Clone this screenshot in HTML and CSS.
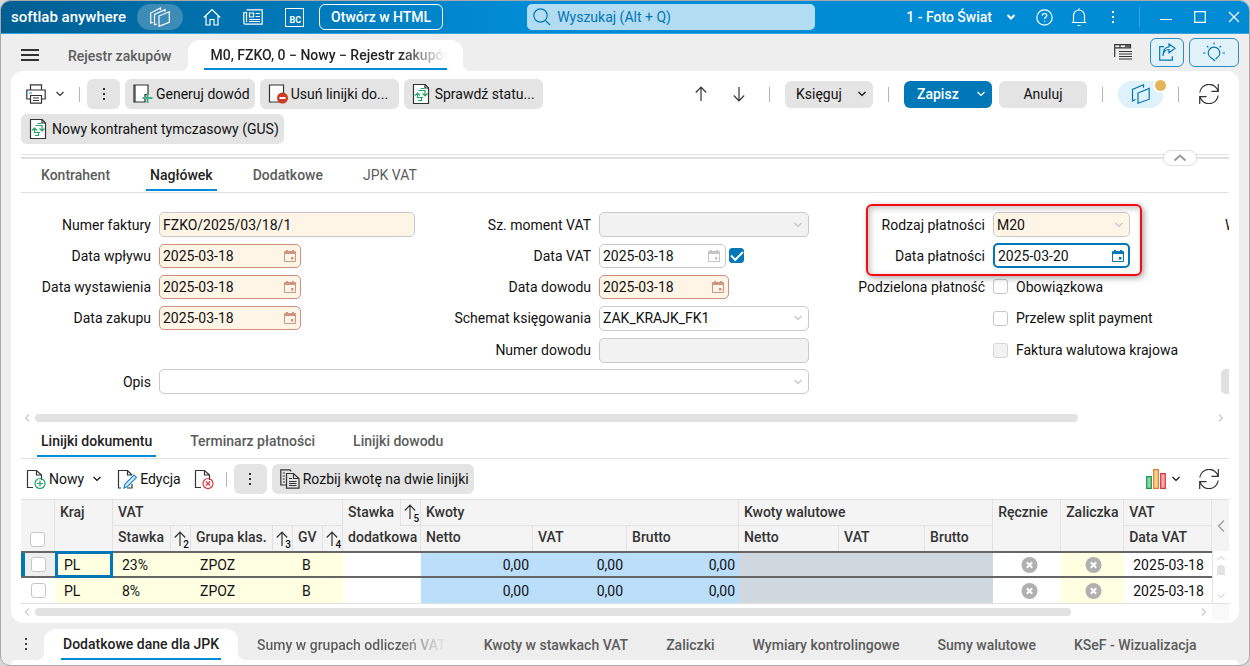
FILE: index.html
```html
<!DOCTYPE html>
<html lang="pl">
<head>
    <meta charset="UTF-8">
    <meta name="viewport" content="width=device-width, initial-scale=1.0">
    <title>Rejestr zakupów</title>
    <link rel="stylesheet" href="styles.css">
</head>
<body>
    <svg class="sprite" aria-hidden="true">
        <symbol id="chevron" viewBox="0 0 10 10"><path d="M1.5 3L5 6.5 8.5 3"/></symbol>
        <symbol id="dots" viewBox="0 0 4 14"><path class="solid" d="M1 1h2v2H1zM1 6h2v2H1zM1 11h2v2H1z"/></symbol>
        <symbol id="calendar" viewBox="0 0 12 12"><path class="solid" fill-rule="evenodd" d="M2 0h2v1h4V0h2v1h1a1 1 0 0 1 1 1v9a1 1 0 0 1-1 1H1a1 1 0 0 1-1-1V2a1 1 0 0 1 1-1h1zM1 4v7h10V4zM7 7h2.500v2.500H7z"/></symbol>
        <symbol id="refresh" viewBox="0 0 20 20"><path d="M.8 8.500A9.300 9.300 0 0 1 19 7.200M19.300 0v7.300H12.500M19.200 11.500A9.300 9.300 0 0 1 1 12.800M.7 20v-7.300H7.500"/></symbol>
        <symbol id="sync-doc" viewBox="0 0 20 20"><path class="paper" d="M1.500.5h11.500l3.500 3.500v15.500h-15z"/><path d="M13 .5V4h3.500"/><path class="green" d="M6.500 6.500h6.500v5M10.500 9.500l2.500 2.500 2.500-2.500M8.500 4.500h4M11 13.500H5.500V9.500M3 11.500l2.500-2.500L8 11.500M6 16.500h3.500v-3"/></symbol>
        <symbol id="close-circle" viewBox="0 0 17 16"><circle class="solid" cx="8.500" cy="8" r="8"/><path class="cross" d="M5.800 5.300l5.400 5.400M11.200 5.300l-5.400 5.400"/></symbol>
        <symbol id="arrow-up" viewBox="0 0 12 16"><path d="M6 15V1.500M.8 6.500L6 1.200l5.200 5.300"/></symbol>
        <symbol id="page" viewBox="0 0 20 20"><path d="M7 18.500H1.500v-17h9l5 4.500v5M10.500 1.500V6h5"/></symbol>
    </svg>

    <div class="window">
        <header class="titlebar">
            <span class="brand">softlab anywhere</span>
            <button class="app-pill" aria-label="Aplikacje">
                <svg width="20" height="20" viewBox="0 0 20 20"><path d="M3 15.500L.7 16V6l9.800-5v2M7 17l-2.500.8V7.500L15 2.800v2M9 9l10.300-4.200v10.500L9 19.300z"/></svg>
            </button>
            <button class="title-icon home" aria-label="Start">
                <svg width="18" height="18" viewBox="0 0 18 18"><path d="M.8 9.500L9 1.500l8.200 8M3 8v9h4v-5.500h4V17h4V8"/></svg>
            </button>
            <button class="title-icon" aria-label="Wiadomości">
                <svg width="20" height="16" viewBox="0 0 20 16"><path d="M3.500.8h15.700v14.400H2.300a1.500 1.500 0 0 1-1.500-1.500V3.500h2.700V13M6.500 4h4v4h-4zM12.500 4.500H17M12.500 7.500H17M6 10.500h11M6 12.500h11"/></svg>
            </button>
            <button class="bc-icon">BC</button>
            <button class="open-html">Otwórz w HTML</button>
            <label class="search">
                <svg width="18" height="18" viewBox="0 0 18 18"><circle cx="7.500" cy="7.500" r="6.700"/><path d="M12.300 12.300L17 17"/></svg>
                <input type="search" placeholder="Wyszukaj (Alt + Q)" aria-label="Wyszukaj">
            </label>
            <div class="title-right">
                <button class="company">1 - Foto Świat <svg width="10" height="10"><use href="#chevron"/></svg></button>
                <button class="title-icon help" aria-label="Pomoc">
                    <svg width="17" height="17" viewBox="0 0 17 17"><circle cx="8.500" cy="8.500" r="7.700"/><path d="M6.300 6.800c0-3 4.500-3 4.500-.3 0 1.800-2.200 1.700-2.200 3.500M8.600 11.700v1.400"/></svg>
                </button>
                <button class="title-icon" aria-label="Powiadomienia">
                    <svg width="16" height="19" viewBox="0 0 16 19"><path d="M.8 14.500h14.400M2.500 14.500V7.500a5.500 5.500 0 0 1 11 0v7M8 .5V2M6.500 17.500h3"/></svg>
                </button>
                <button class="title-icon" aria-label="Więcej"><svg width="4" height="14"><use href="#dots"/></svg></button>
                <span class="title-sep"></span>
                <button class="title-icon win" aria-label="Minimalizuj"><svg width="12" height="12" viewBox="0 0 12 12"><path d="M0 8.500h12"/></svg></button>
                <button class="title-icon win" aria-label="Maksymalizuj"><svg width="12" height="12" viewBox="0 0 12 12"><path d="M.7.7h10.600v10.600H.7z"/></svg></button>
                <button class="title-icon win" aria-label="Zamknij"><svg width="12" height="12" viewBox="0 0 12 12"><path d="M1 1l10 10M11 1L1 11"/></svg></button>
            </div>
        </header>

        <nav class="page-tabs">
            <button class="burger" aria-label="Menu"><svg width="18" height="12" viewBox="0 0 18 12"><path class="solid" d="M0 0h18v2H0zM0 5h18v2H0zM0 10h18v2H0z"/></svg></button>
            <a class="page-tab" href="#">Rejestr zakupów</a>
            <a class="page-tab active" href="#"><span class="fade">M0, FZKO, 0 − Nowy − Rejestr zakupów</span></a>
            <div class="page-actions">
                <button class="plain" aria-label="Lista"><svg width="20" height="18" viewBox="0 0 20 18"><path d="M1.700 14V1.600h15.800v3.200H1.700M7 1.600v3.200M12 3.200h5"/><path class="rules" d="M6 8.500h13M6 11h13M6 13.500h13M6 16h13"/></svg></button>
                <button class="outlined share" aria-label="Udostępnij"><svg width="18" height="18" viewBox="0 0 18 18"><path d="M6 3.700H1.700v13.500h12.600v-4M5 13c.3-4.500 2.500-6.500 6-6.500v3.200L17 5.200 11 1v3C6.500 4 5 8 5 13z"/></svg></button>
                <button class="outlined bulb" aria-label="Podpowiedzi"><svg width="22" height="20" viewBox="0 0 22 20"><path d="M12 19l-1.500-1.500L8 15.800a5.800 5.800 0 1 1 6 0L12.500 17M11 .5V2.500M4 4l1.400 1.400M18 4l-1.400 1.400M0 11h2.500M19.500 11H22"/></svg></button>
            </div>
        </nav>

        <main class="panel">
            <div class="toolbar">
                <button class="plain print" aria-label="Drukuj">
                    <svg width="20" height="20" viewBox="0 0 20 20"><path d="M4.500 6V.8h11V6M4.500 15H.8V6h18.400v9H15.500M4.500 11.500h11v7.700h-11zM7 14h6M7 16.500h6"/><path class="blue" d="M3 9h3"/></svg>
                    <svg width="10" height="10"><use href="#chevron"/></svg>
                </button>
                <span class="sep"></span>
                <button class="tool kebab" aria-label="Więcej"><svg width="4" height="14"><use href="#dots"/></svg></button>
                <button class="tool"><svg width="20" height="20" viewBox="0 0 20 20"><path class="paper" d="M1 1h14v9.500h-3V18H1z"/><path d="M2 1v17"/><path class="green plus" d="M14.500 9v10M9.500 14h10"/></svg>Generuj dowód</button>
                <button class="tool wide"><svg width="20" height="20" viewBox="0 0 20 20"><path class="paper" d="M1.500 1h14v17h-14z"/><circle class="red-fill" cx="14.500" cy="14" r="5.500"/><path class="bar" d="M11.500 14h6"/></svg>Usuń linijki do...</button>
                <button class="tool wide"><svg width="20" height="20"><use href="#sync-doc"/></svg>Sprawdź statu...</button>
                <div class="toolbar-right">
                    <div class="arrows">
                        <button aria-label="Poprzedni"><svg width="12" height="16"><use href="#arrow-up"/></svg></button>
                        <button aria-label="Następny"><svg class="down" width="12" height="16"><use href="#arrow-up"/></svg></button>
                    </div>
                    <span class="sep"></span>
                    <button class="action">Księguj <svg width="10" height="10"><use href="#chevron"/></svg></button>
                    <span class="sep"></span>
                    <div class="save-group">
                        <button class="action primary">Zapisz <svg width="10" height="10"><use href="#chevron"/></svg></button>
                        <button class="action center">Anuluj</button>
                    </div>
                    <span class="sep"></span>
                    <button class="related" aria-label="Powiązane">
                        <svg width="20" height="20" viewBox="0 0 20 20"><path d="M4.500 15.500L1.500 17V5.500L12.500.8v3M7 9l11.200-4.500v10.700L7 19.200z"/></svg>
                        <span class="badge"></span>
                    </button>
                    <span class="sep"></span>
                    <button class="plain reload" aria-label="Odśwież"><svg width="20" height="20"><use href="#refresh"/></svg></button>
                </div>
            </div>
            <div class="toolbar second">
                <button class="tool"><svg width="20" height="20"><use href="#sync-doc"/></svg>Nowy kontrahent tymczasowy (GUS)</button>
            </div>

            <div class="splitter">
                <button class="collapse" aria-label="Zwiń"><svg width="14" height="8" viewBox="0 0 14 8"><path d="M1.500 6.500L7 1.500l5.500 5"/></svg></button>
            </div>

            <nav class="tabs">
                <a href="#">Kontrahent</a>
                <a href="#" class="active">Nagłówek</a>
                <a href="#">Dodatkowe</a>
                <a href="#" class="light">JPK VAT</a>
            </nav>

            <form class="form">
                <label class="c1 r1" for="numer">Numer faktury</label>
                <div class="field required c2 r1"><input id="numer" value="FZKO/2025/03/18/1"></div>
                <label class="c1 r2" for="wplyw">Data wpływu</label>
                <div class="field required date c2 r2"><input id="wplyw" value="2025-03-18"><svg width="12" height="12"><use href="#calendar"/></svg></div>
                <label class="c1 r3" for="wystawienie">Data wystawienia</label>
                <div class="field required date c2 r3"><input id="wystawienie" value="2025-03-18"><svg width="12" height="12"><use href="#calendar"/></svg></div>
                <label class="c1 r4" for="zakup">Data zakupu</label>
                <div class="field required date c2 r4"><input id="zakup" value="2025-03-18"><svg width="12" height="12"><use href="#calendar"/></svg></div>
                <label class="c1 r6" for="opis">Opis</label>
                <div class="field opis r6"><select id="opis"><option></option></select><svg width="10" height="10"><use href="#chevron"/></svg></div>

                <label class="c3 r1" for="moment">Sz. moment VAT</label>
                <div class="field disabled c4 r1"><select id="moment" disabled><option></option></select><svg width="10" height="10"><use href="#chevron"/></svg></div>
                <label class="c3 r2" for="datavat">Data VAT</label>
                <div class="pair c4 r2">
                    <div class="field"><input id="datavat" value="2025-03-18"><svg width="12" height="12"><use href="#calendar"/></svg></div>
                    <input type="checkbox" aria-label="Data VAT aktywna" checked>
                </div>
                <label class="c3 r3" for="dowod">Data dowodu</label>
                <div class="field required date short c4 r3"><input id="dowod" value="2025-03-18"><svg width="12" height="12"><use href="#calendar"/></svg></div>
                <label class="c3 r4" for="schemat">Schemat księgowania</label>
                <div class="field c4 r4"><select id="schemat"><option>ZAK_KRAJK_FK1</option></select><svg width="10" height="10"><use href="#chevron"/></svg></div>
                <label class="c3 r5" for="nrdowodu">Numer dowodu</label>
                <div class="field disabled c4 r5"><input id="nrdowodu" disabled></div>

                <label class="c5 r1" for="rodzaj">Rodzaj płatności</label>
                <div class="field required c6 r1"><select id="rodzaj"><option>M20</option></select><svg width="10" height="10"><use href="#chevron"/></svg></div>
                <label class="c5 r2" for="platnosc">Data płatności</label>
                <div class="field focused c6 r2"><input id="platnosc" value="2025-03-20"><svg width="12" height="12"><use href="#calendar"/></svg></div>
                <span class="c5 r3 label">Podzielona płatność</span>
                <label class="check c6 r3"><input type="checkbox">Obowiązkowa</label>
                <label class="check c6 r4"><input type="checkbox">Przelew split payment</label>
                <label class="check c6 r5"><input type="checkbox" disabled>Faktura walutowa krajowa</label>
                <div class="highlight"></div>

                <span class="next-label">W</span>
                <button class="next-button" type="button" aria-label="Dalej"></button>
            </form>

            <div class="hscroll">
                <svg class="left" width="10" height="10"><use href="#chevron"/></svg>
                <div class="track"><div class="thumb"></div></div>
                <svg class="right" width="10" height="10"><use href="#chevron"/></svg>
            </div>

            <nav class="tabs lower">
                <a href="#" class="active">Linijki dokumentu</a>
                <a href="#">Terminarz płatności</a>
                <a href="#">Linijki dowodu</a>
            </nav>

            <div class="toolbar lines">
                <button class="plain new"><svg width="20" height="20" viewBox="0 0 20 20"><use href="#page"/><circle class="green" cx="14" cy="14.500" r="5"/><path class="green" d="M14 11.500v6M11 14.500h6"/></svg>Nowy <svg width="10" height="10"><use href="#chevron"/></svg></button>
                <button class="plain"><svg width="20" height="20" viewBox="0 0 20 20"><path d="M4 19H1.500V1.500h9L15 6M10.500 1.500V6H15M10 19h5v-4"/><path class="blue pen" d="M7 19l1-4L17 6l2.500 2.500-9 9z"/></svg>Edycja</button>
                <button class="plain remove" aria-label="Usuń"><svg width="20" height="20" viewBox="0 0 20 20"><use href="#page"/><circle class="red" cx="14" cy="14.500" r="5"/><path class="red" d="M12 12.500l4 4M16 12.500l-4 4"/></svg></button>
                <span class="sep"></span>
                <button class="tool kebab" aria-label="Więcej"><svg width="4" height="14"><use href="#dots"/></svg></button>
                <button class="tool"><svg width="20" height="20" viewBox="0 0 20 20"><path d="M6 16H.8V.8h9l1.500 1.500M6.500 4.500h7l5.500 5v9.700H6.500zM13.500 4.500v5H19M9 12.500h7.500M9 14.500h7.500M9 16.500h7.500M9 9.500h3M2.800 4h2M2.800 7h2M2.800 10h2M2.800 13h2"/></svg>Rozbij kwotę na dwie linijki</button>
                <div class="lines-right">
                    <button class="plain chart" aria-label="Wykres">
                        <svg width="20" height="20" viewBox="0 0 20 20"><path class="bar-green" d="M.7 7.700h4.600v11.600H.7z"/><path class="bar-orange" d="M7.700.7h4.600v18.600H7.700z"/><path class="bar-red" d="M14.700 4.700h4.600v14.600h-4.600z"/></svg>
                        <svg width="10" height="10"><use href="#chevron"/></svg>
                    </button>
                    <button class="plain reload" aria-label="Odśwież"><svg width="20" height="20"><use href="#refresh"/></svg></button>
                </div>
            </div>

            <div class="grid-wrap">
                <table class="grid">
                    <colgroup>
                        <col class="w-check"><col class="w-name"><col class="w-name"><col class="w-sort">
                        <col class="w-group"><col class="w-sort"><col class="w-gv"><col class="w-sort">
                        <col class="w-name"><col class="w-sort"><col class="w-amount"><col class="w-vat">
                        <col class="w-amount"><col class="w-cur"><col class="w-curvat"><col class="w-flag">
                        <col class="w-flag"><col class="w-adv"><col>
                    </colgroup>
                    <thead>
                        <tr>
                            <th rowspan="2" class="bottom"><input type="checkbox" aria-label="Zaznacz wszystkie"></th>
                            <th rowspan="2">Kraj</th>
                            <th colspan="6" class="line">VAT</th>
                            <th>Stawka</th>
                            <th class="line sort"><svg width="12" height="16"><use href="#arrow-up"/></svg><sub>5</sub></th>
                            <th colspan="3" class="line">Kwoty</th>
                            <th colspan="3" class="line">Kwoty walutowe</th>
                            <th rowspan="2">Ręcznie</th>
                            <th rowspan="2">Zaliczka</th>
                            <th class="line">VAT</th>
                        </tr>
                        <tr>
                            <th>Stawka</th>
                            <th class="sort"><svg width="12" height="16"><use href="#arrow-up"/></svg><sub>2</sub></th>
                            <th>Grupa klas.</th>
                            <th class="sort"><svg width="12" height="16"><use href="#arrow-up"/></svg><sub>3</sub></th>
                            <th>GV</th>
                            <th class="sort"><svg width="12" height="16"><use href="#arrow-up"/></svg><sub>4</sub></th>
                            <th colspan="2">dodatkowa</th>
                            <th>Netto</th>
                            <th>VAT</th>
                            <th>Brutto</th>
                            <th>Netto</th>
                            <th>VAT</th>
                            <th>Brutto</th>
                            <th>Data VAT</th>
                        </tr>
                    </thead>
                    <tbody>
                        <tr class="selected">
                            <td class="mark"><input type="checkbox" aria-label="Zaznacz wiersz 1"></td>
                            <td class="yellow current">PL</td>
                            <td class="yellow" colspan="2">23%</td>
                            <td class="yellow" colspan="2">ZPOZ</td>
                            <td class="yellow" colspan="2">B</td>
                            <td colspan="2"></td>
                            <td class="sum">0,00</td>
                            <td class="sum">0,00</td>
                            <td class="sum">0,00</td>
                            <td class="grey" colspan="3"></td>
                            <td class="flag"><svg width="17" height="16"><use href="#close-circle"/></svg></td>
                            <td class="flag yellow"><svg width="17" height="16"><use href="#close-circle"/></svg></td>
                            <td>2025-03-18</td>
                        </tr>
                        <tr>
                            <td class="mark"><input type="checkbox" aria-label="Zaznacz wiersz 2"></td>
                            <td class="yellow">PL</td>
                            <td class="yellow" colspan="2">8%</td>
                            <td class="yellow" colspan="2">ZPOZ</td>
                            <td class="yellow" colspan="2">B</td>
                            <td colspan="2"></td>
                            <td class="sum">0,00</td>
                            <td class="sum">0,00</td>
                            <td class="sum">0,00</td>
                            <td class="grey" colspan="3"></td>
                            <td class="flag"><svg width="17" height="16"><use href="#close-circle"/></svg></td>
                            <td class="flag yellow"><svg width="17" height="16"><use href="#close-circle"/></svg></td>
                            <td>2025-03-18</td>
                        </tr>
                    </tbody>
                </table>
                <div class="side">
                    <button class="side-top" aria-label="Rozwiń kolumny"><svg width="8" height="14" viewBox="0 0 8 14"><path d="M7 1.500L1.500 7 7 12.500"/></svg></button>
                    <div class="vscroll">
                        <svg class="up" width="10" height="10"><use href="#chevron"/></svg>
                        <div class="vthumb"></div>
                        <svg width="10" height="10"><use href="#chevron"/></svg>
                    </div>
                </div>
            </div>
            <div class="hscroll grid-scroll">
                <svg class="left" width="10" height="10"><use href="#chevron"/></svg>
                <div class="track"><div class="thumb"></div></div>
                <svg class="right" width="10" height="10"><use href="#chevron"/></svg>
                <div class="corner"></div>
            </div>
        </main>

        <nav class="bottom-tabs">
            <button class="kebab" aria-label="Więcej"><svg width="4" height="14"><use href="#dots"/></svg></button>
            <a class="page-tab active" href="#"><span>Dodatkowe dane dla JPK</span></a>
            <a class="page-tab" href="#"><span class="fade">Sumy w grupach odliczeń VAT</span></a>
            <a class="page-tab" href="#">Kwoty w stawkach VAT</a>
            <a class="page-tab" href="#">Zaliczki</a>
            <a class="page-tab" href="#">Wymiary kontrolingowe</a>
            <a class="page-tab" href="#">Sumy walutowe</a>
            <a class="page-tab" href="#">KSeF - Wizualizacja</a>
        </nav>
        <div class="next-panel"></div>
    </div>
</body>
</html>
```
FILE: styles.css
```css
* {
    box-sizing: border-box;
}
body {
    margin: 0;
    background: #d8d8d8;
    font-family: Roboto, "Liberation Sans", sans-serif;
    font-size: 14px;
    line-height: 16px;
    color: #111;
}
button, input, select {
    font: inherit;
    color: inherit;
    margin: 0;
    padding: 0;
}
button {
    border: 0;
    background: none;
    display: flex;
    align-items: center;
    white-space: nowrap;
}
a {
    color: inherit;
    text-decoration: none;
    white-space: nowrap;
}
svg {
    display: block;
    flex: none;
    fill: none;
    stroke: currentColor;
    stroke-width: 1.2;
}
.sprite {
    position: absolute;
    width: 0;
    height: 0;
}
.solid {
    fill: currentColor;
    stroke: none;
}
.paper {
    fill: #fff;
}
.green {
    stroke: #22a565;
}
.plus {
    stroke: #41b087;
    stroke-width: 2;
}
.red {
    stroke: #e5383b;
}
.blue {
    stroke: #1e88d0;
}
.pen {
    fill: #d9edf9;
}
.red-fill {
    fill: #cf3a22;
    stroke: none;
}
.bar {
    stroke: #fff;
    stroke-width: 2;
}
.cross {
    stroke: #fff;
    stroke-width: 2;
}
.bar-green {
    fill: #8fd3aa;
    stroke: #12984a;
}
.bar-orange {
    fill: #fbd48d;
    stroke: #dc7a2c;
}
.bar-red {
    fill: #f5a9ac;
    stroke: #dd3038;
}
.window {
    display: flex;
    flex-direction: column;
    min-height: 100vh;
    border: 1px solid #a9a9a9;
    border-radius: 10px;
    background: #eee;
    overflow: hidden;
}

/* title bar */
.titlebar {
    display: flex;
    align-items: center;
    height: 33px;
    padding: 0 9px 0 10px;
    border-bottom: 1px solid #3aa5dc;
    background: linear-gradient(90deg, #005f92, #008cd5 520px);
    color: #fff;
}
.brand {
    font-size: 15px;
    font-weight: 500;
}
.app-pill {
    justify-content: center;
    width: 46px;
    height: 26px;
    margin: 0 20px 0 11px;
    border-radius: 13px;
    background: #3d8cb8;
}
.title-icon {
    justify-content: center;
}
.home {
    margin-right: 22px;
}
.bc-icon {
    align-items: flex-end;
    justify-content: flex-end;
    width: 19px;
    height: 19px;
    margin: 0 15px 0 22px;
    padding: 0 2px 1px 0;
    border: 1px solid #fff;
    font-size: 9px;
    line-height: 10px;
    font-weight: 700;
}
.open-html {
    height: 26px;
    padding: 0 11px;
    border: 1px solid #fff;
    border-radius: 6px;
    font-weight: 500;
}
.search {
    display: flex;
    align-items: center;
    gap: 6px;
    width: 288px;
    height: 26px;
    margin-left: 84px;
    padding: 0 6px;
    border-radius: 5px;
    background: #b2dcf2;
    color: #0077b6;
}
.search input {
    flex: 1;
    min-width: 0;
    border: 0;
    background: none;
    outline: none;
}
.search input::placeholder {
    color: #0077b6;
}
.title-right {
    display: flex;
    align-items: center;
    gap: 24px;
    margin-left: auto;
}
.company {
    gap: 14px;
    margin-right: -4px;
    font-weight: 500;
}
.company svg {
    stroke-width: 2;
}
.help {
    margin-right: -6px;
}
.title-sep {
    width: 1px;
    height: 20px;
    background: #3aa5dc;
}
.title-right .win + .win {
    margin-left: -2px;
}
.title-sep + .win {
    margin-left: -4px;
}

/* page tabs */
.page-tabs, .bottom-tabs {
    display: flex;
    align-items: stretch;
    height: 37px;
    padding: 0 10px 0 20px;
    color: #5c5c5c;
    font-weight: 500;
}
.burger {
    height: 42px;
    margin-right: 12px;
    color: #333;
}
.page-tab {
    display: flex;
    align-items: center;
    padding: 0 17px;
}
.page-tabs .page-tab {
    height: 31px;
    margin-top: 6px;
    padding-right: 16px;
}
.page-tab.active {
    position: relative;
    padding: 0 16px;
    border-radius: 12px 12px 0 0;
    background: #fff;
    color: #222;
}
.page-tab.active::before, .page-tab.active::after {
    content: "";
    position: absolute;
    bottom: 0;
    left: -8px;
    width: 8px;
    height: 8px;
    background: radial-gradient(circle at 0 0, #eee 8px, #fff 8px);
}
.page-tab.active::after {
    left: auto;
    right: -8px;
    background: radial-gradient(circle at 100% 0, #eee 8px, #fff 8px);
}
.page-tab.active span {
    display: flex;
    align-items: center;
    height: 29px;
    border-bottom: 2px solid #008cd5;
}
.page-tabs .active span {
    width: 243px;
    padding-left: 7px;
}
.fade {
    overflow: hidden;
    background: linear-gradient(90deg, currentColor calc(100% - 48px), transparent) text;
    -webkit-text-fill-color: transparent;
}
.page-actions {
    display: flex;
    align-items: center;
    gap: 5px;
    height: 36px;
    margin-left: auto;
    color: #333;
}
.plain {
    gap: 4px;
}
.page-actions .plain {
    margin-right: 12px;
}
.outlined {
    justify-content: center;
    width: 34px;
    height: 29px;
    border: 1px solid #2b8dc2;
    border-radius: 6px;
    background: #e0f1fa;
    color: #0077b6;
}
.bulb {
    width: 50px;
}

/* main panel */
.panel {
    margin: 0 10px;
    padding: 8px 10px 3px;
    border-radius: 12px;
    background: #fff;
}
.toolbar {
    display: flex;
    align-items: center;
    gap: 5px;
    height: 30px;
}
.toolbar.second {
    margin-top: 5px;
}
.print {
    gap: 9px;
    margin: 0 9px 0 5px;
    color: #333;
}
.sep {
    width: 1px;
    height: 15px;
    background: #b5b5b5;
}
.sep + .kebab {
    margin-left: 2px;
}
.tool {
    gap: 3px;
    height: 30px;
    padding: 0 5px 0 8px;
    border-radius: 6px;
    background: #e4e4e4;
}
.tool svg {
    color: #333;
}
.tool.wide {
    width: 139px;
}
.tool.kebab {
    justify-content: center;
    width: 33px;
    padding: 0;
}
.toolbar-right {
    display: flex;
    align-items: center;
    gap: 15px;
    margin-left: auto;
    padding-right: 5px;
    color: #333;
}
.arrows, .save-group {
    display: flex;
    gap: 7px;
}
.arrows button {
    justify-content: center;
    width: 31px;
    height: 27px;
}
.down, .up {
    transform: rotate(180deg);
}
.action {
    justify-content: space-between;
    width: 88px;
    height: 27px;
    padding: 0 6px 0 11px;
    border-radius: 6px;
    background: #e4e4e4;
    color: #111;
}
.action.primary {
    padding-left: 13px;
    background: #0077b6;
    color: #fff;
    font-weight: 500;
}
.action.center {
    justify-content: center;
    padding: 0;
}
.related {
    position: relative;
    justify-content: center;
    width: 45px;
    height: 27px;
    border-radius: 13px;
    background: #dff1fb;
    color: #0077b6;
}
.badge {
    position: absolute;
    top: -3px;
    right: -5px;
    width: 15px;
    height: 15px;
    border: 2px solid #fff;
    border-radius: 50%;
    background: #e3b65c;
}
.reload {
    justify-content: center;
    width: 30px;
    height: 30px;
    color: #333;
}
.splitter {
    position: relative;
    height: 5px;
    margin-top: 10px;
    border-top: 1px solid #e2e2e2;
    border-bottom: 2px solid #dedede;
}
.collapse {
    position: absolute;
    top: -5px;
    right: 32px;
    justify-content: center;
    width: 34px;
    height: 16px;
    border: 1px solid #ddd;
    border-radius: 8px;
    background: #fff;
    color: #999;
}
.collapse svg {
    stroke-width: 2;
}
.tabs {
    display: flex;
    gap: 32px;
    height: 34px;
    padding-left: 16px;
    border-bottom: 1px solid #e0e0e0;
    color: #5c5c5c;
    font-weight: 500;
}
.tabs.lower {
    gap: 30px;
}
.tabs a {
    display: flex;
    align-items: center;
    height: 32px;
    padding: 2px 4px 0;
    border-bottom: 2px solid transparent;
}
.tabs a.active {
    border-color: #008cd5;
    color: #222;
}
.tabs a.light {
    font-weight: 400;
}

/* document header form */
.form {
    display: grid;
    grid-template-columns: 130px 256px 168px 210px 168px 137px 75px 40px;
    grid-template-rows: 25px 25px 25px 26px 26px 25px;
    gap: 6px 8px;
    align-items: center;
    padding: 19px 0 16px;
    overflow: hidden;
}
.form label, .label {
    text-align: right;
    white-space: nowrap;
}
.c1 { grid-column: 1; }
.c2 { grid-column: 2; }
.c3 { grid-column: 3; }
.c4 { grid-column: 4; }
.c5 { grid-column: 5; }
.c6 { grid-column: 6; }
.r1 { grid-row: 1; }
.r2 { grid-row: 2; }
.r3 { grid-row: 3; }
.r4 { grid-row: 4; }
.r5 { grid-row: 5; }
.r6 { grid-row: 6; }
.field {
    display: flex;
    align-items: center;
    height: 25px;
    padding: 0 5px 0 3px;
    border: 1px solid #c9c9c9;
    border-radius: 5px;
    background: #fff;
}
.field svg {
    color: #c4c4c4;
}
.field input, .field select {
    flex: 1;
    width: 0;
    min-width: 0;
    border: 0;
    outline: none;
    background: none;
    appearance: none;
}
.required {
    background: #fff5e6;
}
.date {
    width: 142px;
    height: 24px;
    padding-right: 4px;
    border-color: #d08e7d;
}
.date svg {
    color: #d09482;
}
.short {
    width: 130px;
}
.disabled {
    background: #f2f2f2;
}
.focused {
    padding-right: 4px;
    border: 2px solid #0077b6;
}
.focused svg {
    color: #0077b6;
}
.opis {
    grid-column: 2 / 5;
}
.pair {
    display: flex;
    align-items: center;
    gap: 3px;
}
.pair .field {
    width: 127px;
    height: 24px;
}
input[type="checkbox"] {
    display: flex;
    align-items: center;
    justify-content: center;
    flex: none;
    width: 15px;
    height: 15px;
    border: 1px solid #c6c6c6;
    border-radius: 3px;
    background: #fff;
    appearance: none;
}
input[type="checkbox"]:checked {
    border-color: #0077b6;
    background: #0077b6;
}
input[type="checkbox"]:checked::before {
    content: "";
    width: 10px;
    height: 5px;
    margin-bottom: 3px;
    border: solid #fff;
    border-width: 0 0 2px 2px;
    transform: rotate(-45deg);
}
input[type="checkbox"]:disabled {
    border-color: #d6d6d6;
    background: #f2f2f2;
}
.form .check {
    display: flex;
    align-items: center;
    gap: 8px;
}
.highlight {
    grid-area: 1 / 5 / 3 / 7;
    align-self: stretch;
    margin: -8px -12px -8px 49px;
    border: 2px solid #f50a12;
    border-radius: 6px;
    box-shadow: 2px 2px 6px rgba(0, 0, 0, 0.35), inset 2px 2px 6px rgba(0, 0, 0, 0.25);
    pointer-events: none;
}
.next-label {
    grid-area: 1 / 8;
    padding-left: 4px;
}
.next-button {
    grid-area: 6 / 8;
    height: 25px;
    border-radius: 5px;
    background: #e0e0e0;
}
.hscroll {
    display: flex;
    align-items: center;
    gap: 3px;
    height: 16px;
    padding: 0 3px 0 1px;
    color: #ccc;
}
.form + .hscroll {
    height: 15px;
}
.left {
    transform: rotate(90deg);
}
.right {
    transform: rotate(-90deg);
}
.track {
    flex: 1;
}
.thumb {
    width: 88.5%;
    height: 8px;
    border-radius: 4px;
    background: #e2e2e2;
}

/* document lines */
.toolbar.lines {
    height: 40px;
    padding-left: 5px;
}
.new {
    margin-right: 10px;
}
.new svg:last-child {
    margin-left: 5px;
}
.lines .plain {
    gap: 3px;
}
.lines .plain > svg:first-child {
    color: #333;
}
.remove {
    margin: 0 7px 0 8px;
}
.lines-right {
    display: flex;
    align-items: center;
    gap: 13px;
    margin-left: auto;
    padding-right: 5px;
}
.lines .chart {
    gap: 5px;
}
.grid-wrap {
    display: flex;
    border-top: 1px solid #e0e0e0;
    border-bottom: 1px solid #e0e0e0;
}
.grid {
    flex: 1;
    width: 0;
    table-layout: fixed;
    border-collapse: separate;
    border-spacing: 0;
}
.w-check { width: 34px; }
.w-name { width: 58px; }
.w-sort { width: 20px; }
.w-group { width: 82px; }
.w-gv { width: 30px; }
.w-amount { width: 112px; }
.w-vat { width: 94px; }
.w-cur { width: 100px; }
.w-curvat { width: 86px; }
.w-flag { width: 68px; }
.w-adv { width: 63px; }
.grid th, .grid td {
    height: 25px;
    padding: 0 0 0 5px;
    text-align: left;
    white-space: nowrap;
}
.grid th {
    padding-bottom: 4px;
    border-right: 1px solid #e2e2e2;
    background: #f4f4f4;
    color: #333;
    font-weight: 500;
    vertical-align: middle;
}
.grid th[rowspan] {
    padding-top: 4px;
    vertical-align: top;
}
.grid tr:first-child th {
    height: 26px;
    padding-bottom: 2px;
}
.grid th.line {
    border-bottom: 1px solid #e2e2e2;
}
.grid tr:first-child th.bottom {
    padding: 0 0 4px 9px;
    vertical-align: bottom;
}
.grid th.sort {
    position: relative;
    padding: 0 0 0 3px;
}
.sort sub {
    position: absolute;
    right: 1px;
    bottom: 1px;
    font-size: 10px;
    line-height: 10px;
    color: #111;
}
.grid td {
    padding: 0 0 0 9px;
}
.grid .selected td {
    height: 27px;
    border: solid #666;
    border-width: 2px 0;
}
.grid .yellow {
    background: #ffffe1;
}
.grid .selected .current {
    padding-left: 6px;
    border: 3px solid #0077b6;
}
.grid .mark {
    padding-left: 10px;
}
.grid .selected .mark {
    background: #eee;
    box-shadow: inset 4px 0 #0077b6;
}
.grid .sum {
    padding: 0 4px 0 0;
    background: #bbdefb;
    text-align: right;
}
.grid .grey {
    background: #cfd8de;
}
.grid .flag {
    padding: 0 0 0 28px;
    color: #b0b0b0;
}
.grid .flag.yellow {
    padding-left: 24px;
}
.side {
    display: flex;
    flex-direction: column;
    width: 17px;
}
.side-top {
    justify-content: center;
    height: 51px;
    background: #f4f4f4;
    color: #999;
}
.vscroll {
    display: flex;
    flex: 1;
    flex-direction: column;
    align-items: center;
    gap: 2px;
    padding: 2px 0;
    border-left: 1px solid #e2e2e2;
    color: #ddd;
}
.vthumb {
    width: 8px;
    height: 10px;
    margin-bottom: auto;
    border-radius: 4px 4px 0 0;
    background: #e2e2e2;
}
.grid-scroll {
    padding-right: 0;
}
.grid-scroll .thumb {
    width: 89.2%;
}
.corner {
    width: 17px;
    height: 16px;
    background: #f9f9f9;
}

/* bottom tabs */
.bottom-tabs {
    padding-left: 23px;
}
.bottom-tabs .kebab {
    height: 41px;
    margin-right: 16px;
    color: #444;
}
.bottom-tabs .page-tab {
    height: 31px;
    margin-top: 6px;
    padding: 0 19px;
}
.bottom-tabs .page-tab.active {
    padding: 0 17px;
}
.bottom-tabs .active span {
    height: 31px;
    padding: 0 2px;
}
.next-panel {
    flex: 1;
    margin: 0 10px;
    border-radius: 12px 12px 0 0;
    background: #fff;
}
```
